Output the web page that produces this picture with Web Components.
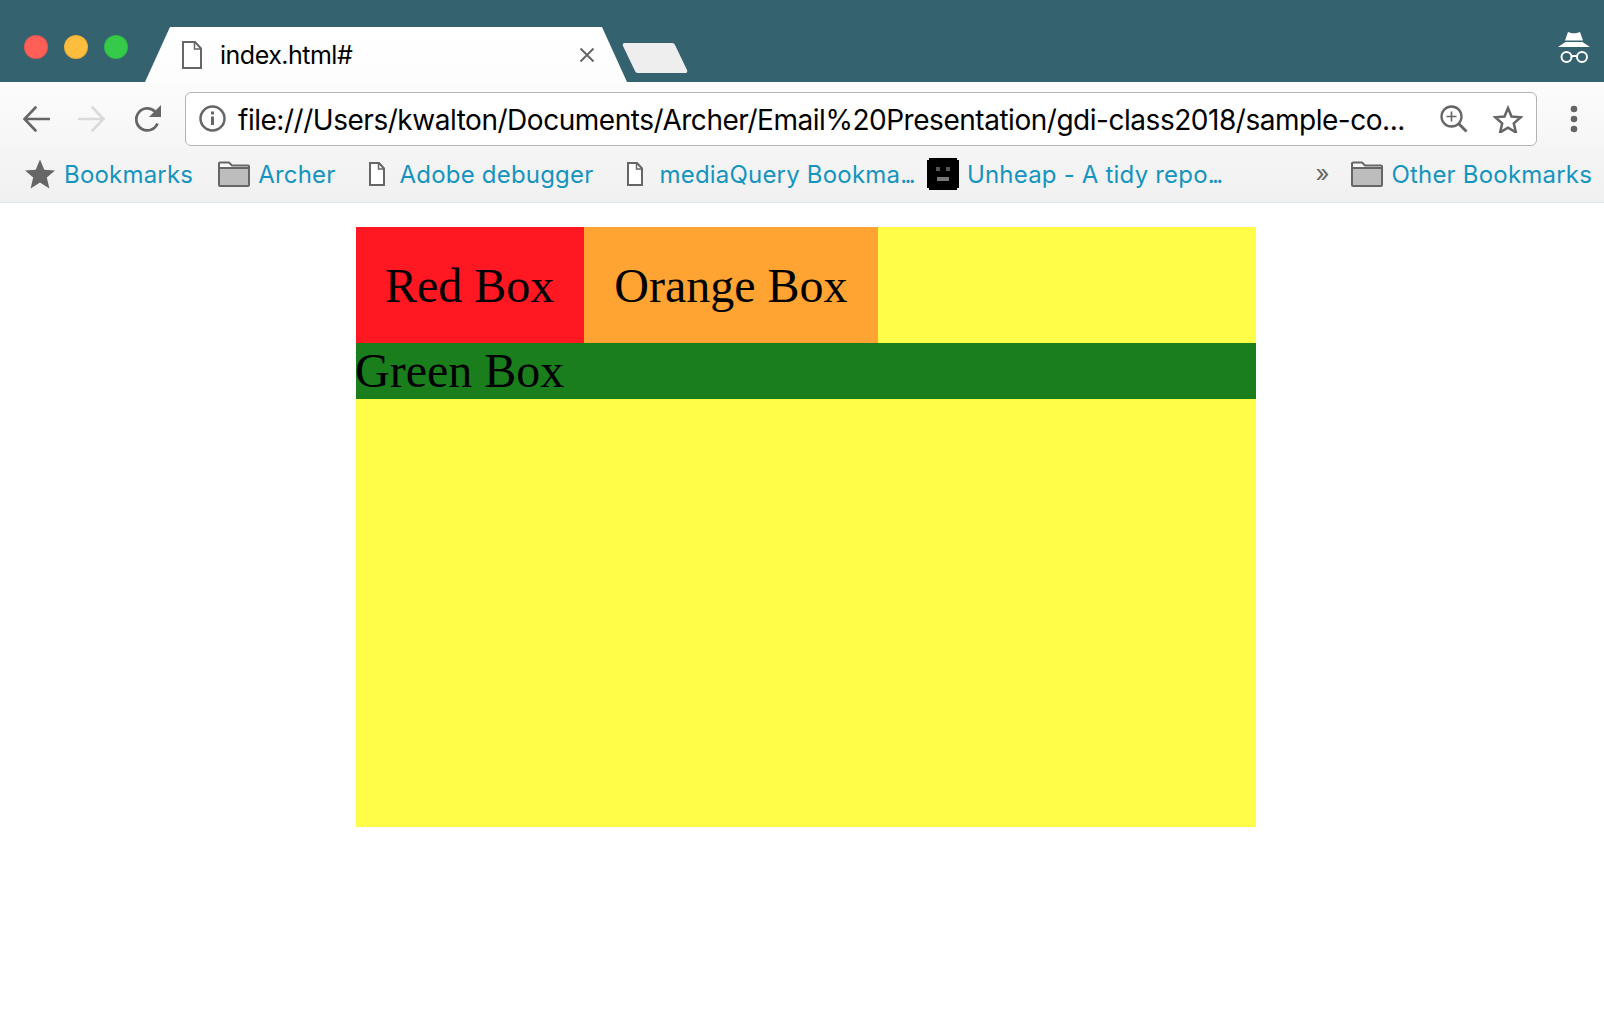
<!DOCTYPE html>
<html>
<head>
<meta charset="utf-8">
<title>index.html#</title>
<style>
html, body { margin: 0; padding: 0; background: #fff; }
body { width: 1604px; height: 1014px; overflow: hidden; font-family: "Liberation Serif", serif; }
.dots { letter-spacing: -2.7px; }
</style>
</head>
<body>
<browser-frame>
  <tab-strip slot="tabs"></tab-strip>
  <nav-bar slot="nav" url="file:///Users/kwalton/Documents/Archer/Email%20Presentation/gdi-class2018/sample-co..."></nav-bar>
  <bookmark-bar slot="bookmarks">
    <bookmark-item slot="left" icon="star" gap="9">Bookmarks</bookmark-item>
    <bookmark-item slot="left" icon="folder" gap="8" left="25">Archer</bookmark-item>
    <bookmark-item slot="left" icon="page" gap="15" left="33">Adobe debugger</bookmark-item>
    <bookmark-item slot="left" icon="page" gap="16" left="34">mediaQuery Bookma<span class="dots">...</span></bookmark-item>
    <bookmark-item slot="left" icon="face" gap="8" left="14">Unheap - A tidy repo<span class="dots">...</span></bookmark-item>
    <bookmark-item slot="right" icon="folder" gap="8">Other Bookmarks</bookmark-item>
  </bookmark-bar>
  <box-page>
    <demo-box color="#ff1722" pad="31px 30px 29px 29px">Red Box</demo-box>
    <demo-box color="#ffa333" pad="31px 30px 29px">Orange Box</demo-box>
    <demo-box slot="wide" color="#1a7e1c" style="--indent: -1px">Green Box</demo-box>
  </box-page>
</browser-frame>

<script>
var grayIcon = '#666'

var icons = {
  star: `<svg width="30" height="30" viewBox="0 0 30 30"><path fill="${grayIcon}" d="M15 0.500l4.300 10.200 10.700 0.900-8.200 7 2.600 10.800-9.400-5.800-9.400 5.800 2.600-10.800-8.200-7 10.700-0.900z"/></svg>`,
  folder: `<svg width="32" height="26" viewBox="0 0 32 26"><path fill="#bdbdbd" stroke="${grayIcon}" stroke-width="2" d="M1 7h30v17a1 1 0 0 1-1 1H2a1 1 0 0 1-1-1z"/><path fill="#f7f7f7" stroke="${grayIcon}" stroke-width="2" d="M1 7V2.500a1 1 0 0 1 1-1h9l3 3h16a1 1 0 0 1 1 1V7z"/></svg>`,
  page: `<svg width="16" height="24" viewBox="0 0 16 24"><path fill="#fff" stroke="${grayIcon}" stroke-width="2" d="M1 1h9l5 5.500V23H1z"/><path fill="none" stroke="${grayIcon}" stroke-width="1.500" d="M9.500 1v6h5.500"/></svg>`,
  face: `<svg width="32" height="32" viewBox="0 0 32 32" shape-rendering="crispEdges"><path d="M2 0h28v2h2v28h-2v2H2v-2H0V2h2z" fill="#000"/><path d="M9 9h4v4H9zM19 9h4v4h-4z" fill="#555"/><path d="M10 19h12v4H10z" fill="#777"/></svg>`
}

class browserFrame extends HTMLElement {
  constructor() {
    super()
    var shadow = this.attachShadow({mode: 'open'})
    shadow.innerHTML = `
<style>
:host { display: flex; flex-direction: column; width: 1604px; height: 1014px; }
main { flex: 1; background: #fff; }
</style>
<slot name="tabs"></slot>
<slot name="nav"></slot>
<slot name="bookmarks"></slot>
<main><slot></slot></main>`
  }
}
customElements.define('browser-frame', browserFrame)

class tabStrip extends HTMLElement {
  constructor() {
    super()
    var shadow = this.attachShadow({mode: 'open'})
    shadow.innerHTML = `
<style>
:host { display: flex; height: 82px; background: #35626f; position: relative; box-sizing: border-box; }
.lights { display: flex; gap: 16px; margin: 35px 0 0 24px; width: 104px; height: 24px; }
.lights i { display: block; width: 24px; height: 24px; border-radius: 50%; box-sizing: border-box; border: 1px solid rgba(0,0,0,.08); }
.tab {
  width: 482px; height: 55px; margin: 27px 0 0 17px;
  background: linear-gradient(#fff, #fdfdfd);
  clip-path: polygon(25px 0, 457px 0, 482px 100%, 0 100%);
  display: flex; align-items: center; box-sizing: border-box; padding: 0 0 0 37px;
  font: 25px Inter, "Noto Sans", sans-serif; color: #000;
}
.tab .title { margin-left: 18px; width: 359px; letter-spacing: -.5px; }
.newtab { margin: 42px 0 0 -5px; }
.spy { position: absolute; left: 1557px; top: 31px; }
</style>
<div class="lights">
  <i style="background:#ff5f57"></i><i style="background:#ffbd3e"></i><i style="background:#35ca49"></i>
</div>
<div class="tab">
  <svg width="20" height="28" viewBox="0 0 20 28"><path fill="#fff" stroke="${grayIcon}" stroke-width="2" d="M1 1h12l6 6.500V27H1z"/><path fill="none" stroke="${grayIcon}" stroke-width="1.500" d="M12.500 1v7H19"/></svg>
  <span class="title">index.html#</span>
  <svg width="16" height="16" viewBox="0 0 16 16"><path stroke="${grayIcon}" stroke-width="2" fill="none" d="M1.500 1.500l13 13M14.500 1.500l-13 13"/></svg>
</div>
<svg class="newtab" width="66" height="32" viewBox="0 0 66 32"><path fill="#eeeeee" d="M3 1h47a3 3 0 0 1 3 2l12 25a2 2 0 0 1-2 3H16a3 3 0 0 1-3-2L1 4a2 2 0 0 1 2-3z"/></svg>
<svg class="spy" width="34" height="33" viewBox="0 0 34 33">
  <path fill="#fff" d="M11 1l4 1.200h4L23 1l3 8.500H8zM8.500 11h17L33 16H1z"/>
  <circle cx="9.500" cy="26" r="5" fill="none" stroke="#fff" stroke-width="2"/>
  <circle cx="25" cy="26" r="5" fill="none" stroke="#fff" stroke-width="2"/>
  <path stroke="#fff" stroke-width="2" d="M14.500 25h6"/>
</svg>`
  }
}
customElements.define('tab-strip', tabStrip)

class navBar extends HTMLElement {
  constructor() {
    super()
    var shadow = this.attachShadow({mode: 'open'})
    shadow.innerHTML = `
<style>
:host { display: flex; align-items: center; height: 64px; box-sizing: border-box; background: linear-gradient(#fcfcfc, #f6f6f6); padding: 9px 0 0 0; }
.btn { flex: none; display: flex; justify-content: center; }
.addr {
  flex: none; width: 1352px; height: 54px; margin-left: 23px; box-sizing: border-box;
  background: #fff; border: 1px solid #b4b4b4; border-radius: 6px;
  display: flex; align-items: center; padding: 0 0 0 13px;
}
.url { margin-left: 12px; padding-top: 2px; width: 1202px; font: 28px Inter, "Noto Sans", sans-serif; color: #000; white-space: nowrap; letter-spacing: -.47px; }
</style>
<div class="btn" style="margin-left:22px"><svg width="28" height="26" viewBox="0 0 28 26"><path fill="none" stroke="${grayIcon}" stroke-width="2.600" stroke-linecap="round" d="M27 13H3M13.500 1.500L2.500 13l11 11.500"/></svg></div>
<div class="btn" style="margin-left:28px"><svg width="28" height="26" viewBox="0 0 28 26"><path fill="none" stroke="#dadada" stroke-width="2.600" stroke-linecap="round" d="M1 13h24M14.500 1.500L25.500 13l-11 11.500"/></svg></div>
<div class="btn" style="margin-left:28px"><svg width="28" height="28" viewBox="0 0 28 28"><path fill="none" stroke="${grayIcon}" stroke-width="2.800" d="M23.500 18.500A11 11 0 1 1 21 6.500"/><path fill="${grayIcon}" d="M27 0v12H15z"/></svg></div>
<div class="addr">
  <svg width="27" height="27" viewBox="0 0 27 27"><circle cx="13.500" cy="13.500" r="12" fill="none" stroke="${grayIcon}" stroke-width="2.500"/><path fill="${grayIcon}" d="M12 11.500h3V20h-3zM12 6.500h3v3h-3z"/></svg>
  <span class="url">${this.getAttribute('url')}</span>
  <svg width="28" height="28" viewBox="0 0 28 28"><circle cx="11.500" cy="11.500" r="10" fill="none" stroke="${grayIcon}" stroke-width="2.300"/><path stroke="${grayIcon}" stroke-width="3" d="M18.500 18.500l8 8"/><path stroke="${grayIcon}" stroke-width="1.600" d="M11.500 6.500v10M6.500 11.500h10"/></svg>
  <svg style="margin-left:25px" width="30" height="28" viewBox="0 0 30 28"><path fill="none" stroke="${grayIcon}" stroke-width="2.500" d="M15 3l3.500 8.500 9.300.8-7 6.100 2.100 9-7.900-4.800-7.900 4.800 2.100-9-7-6.100 9.300-.8z"/></svg>
</div>
<div class="btn" style="margin-left:33px"><svg width="8" height="28" viewBox="0 0 8 28"><circle cx="4" cy="4" r="3.300" fill="${grayIcon}"/><circle cx="4" cy="14" r="3.300" fill="${grayIcon}"/><circle cx="4" cy="24" r="3.300" fill="${grayIcon}"/></svg></div>`
  }
}
customElements.define('nav-bar', navBar)

class bookmarkBar extends HTMLElement {
  constructor() {
    super()
    var shadow = this.attachShadow({mode: 'open'})
    shadow.innerHTML = `
<style>
:host { display: flex; align-items: center; height: 57px; box-sizing: border-box; background: linear-gradient(#f5f5f5, #f1f1f1); border-bottom: 1px solid #d9e9ed; padding: 0 0 1px 25px; }
.right { margin-left: auto; display: flex; align-items: center; padding-right: 12px; }
.more { font: 24px Inter, "Noto Sans", sans-serif; color: ${grayIcon}; margin-right: 22px; }
.left { display: flex; align-items: center; }
</style>
<div class="left"><slot name="left"></slot></div>
<div class="right"><span class="more">»</span><slot name="right"></slot></div>`
  }
}
customElements.define('bookmark-bar', bookmarkBar)

class bookmarkItem extends HTMLElement {
  constructor() {
    super()
  }
  connectedCallback() {
    var shadow = this.attachShadow({mode: 'open'})
    var gap = this.getAttribute('gap') || 8
    var left = this.getAttribute('left') || 0
    shadow.innerHTML = `
<style>
:host { display: inline-flex; align-items: center; margin-left: ${left}px; }
svg { display: block; flex: none; }
span { margin-left: ${gap}px; padding-top: 2px; font: 24px Inter, "Noto Sans", sans-serif; color: #1594bf; white-space: nowrap; letter-spacing: .2px; }
</style>
${icons[this.getAttribute('icon')]}
<span><slot></slot></span>`
  }
}
customElements.define('bookmark-item', bookmarkItem)

class boxPage extends HTMLElement {
  constructor() {
    super()
    var shadow = this.attachShadow({mode: 'open'})
    shadow.innerHTML = `
<style>
:host { display: block; width: 900px; height: 600px; margin: 24px 0 0 356px; background: #fffd47; }
.row { display: flex; }
</style>
<div class="row"><slot></slot></div>
<slot name="wide"></slot>`
  }
}
customElements.define('box-page', boxPage)

class demoBox extends HTMLElement {
  constructor() {
    super()
    var shadow = this.attachShadow({mode: 'open'})
    var pad = this.getAttribute('pad') || 0
    shadow.innerHTML = `
<style>
:host { display: block; background: ${this.getAttribute('color')}; padding: ${pad}; font: 48px/56px "Liberation Serif", "Times New Roman", serif; color: #000; text-indent: var(--indent, 0); }
</style>
<slot></slot>`
  }
}
customElements.define('demo-box', demoBox)
</script>
</body>
</html>
